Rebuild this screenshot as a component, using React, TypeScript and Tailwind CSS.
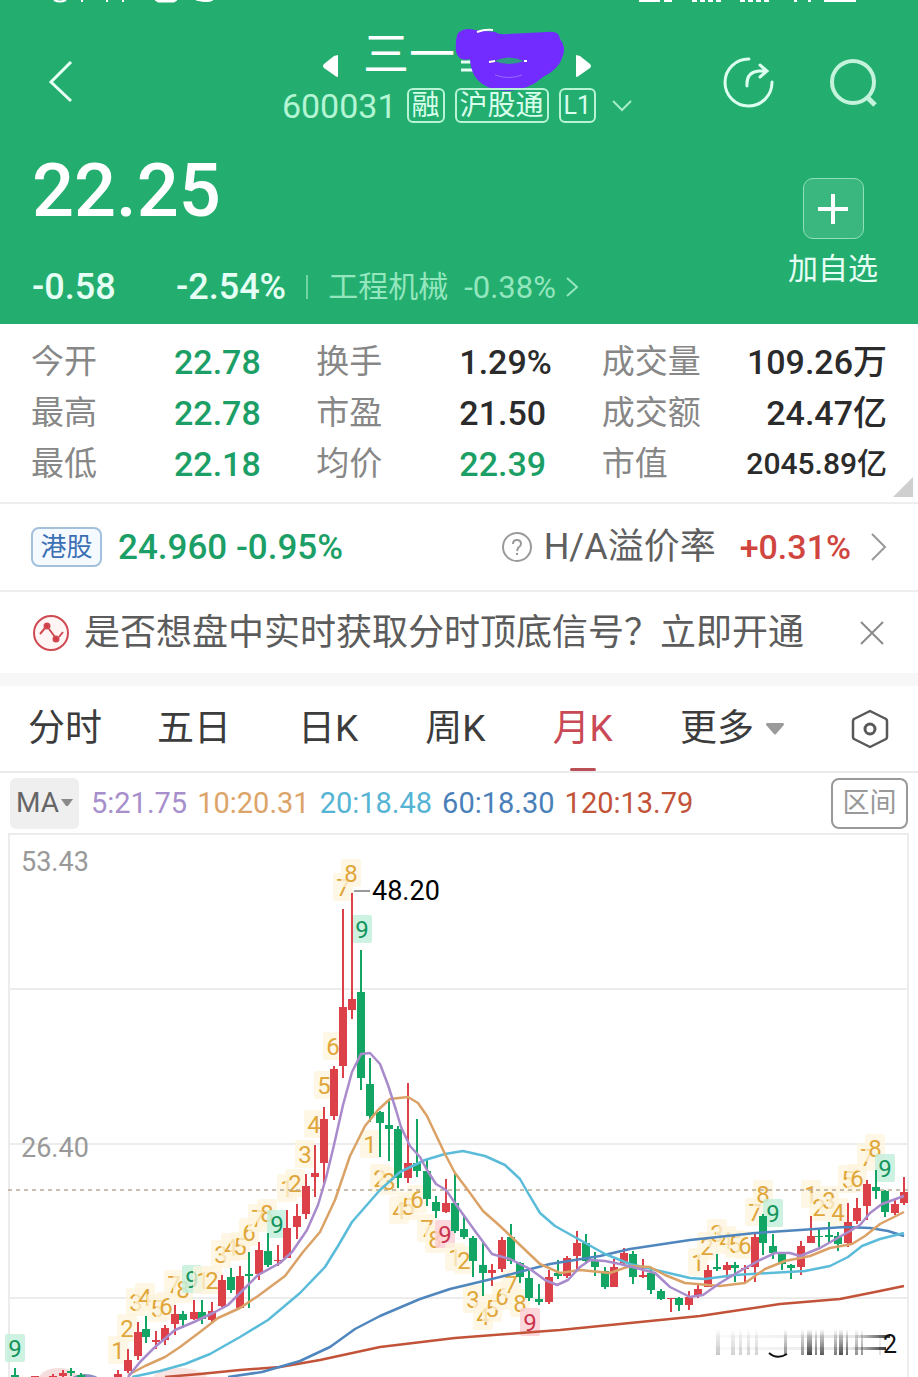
import type { ReactNode } from "react";

const GREEN = "#12a563";
const RED = "#dc4048";

type Candle = [x: number, high: number, top: number, bottom: number, low: number, up: 0 | 1];

// Every entry is in chart units: centre x, wick top, body top, body bottom, wick bottom, rising or not
const candles: Candle[] = [
  [15, 1368, 1375, 1377, 1377, 0],
  [35, 1376, 1376, 1377, 1377, 1],
  [53, 1374, 1376, 1377, 1377, 1],
  [63, 1370, 1373, 1376, 1377, 1],
  [71, 1368, 1371, 1373, 1376, 0],
  [81, 1373, 1375, 1377, 1377, 0],
  [118, 1370, 1374, 1377, 1377, 1],
  [128, 1349, 1360, 1371, 1373, 1],
  [138, 1322, 1332, 1356, 1360, 1],
  [146, 1316, 1329, 1337, 1343, 0],
  [156, 1331, 1340, 1342, 1349, 1],
  [165, 1325, 1328, 1340, 1345, 1],
  [175, 1305, 1314, 1324, 1335, 1],
  [183, 1311, 1314, 1320, 1328, 0],
  [194, 1300, 1312, 1319, 1320, 1],
  [202, 1300, 1312, 1319, 1324, 0],
  [212, 1302, 1311, 1320, 1322, 1],
  [222, 1275, 1280, 1306, 1307, 1],
  [231, 1268, 1277, 1290, 1293, 0],
  [240, 1266, 1276, 1308, 1309, 1],
  [249, 1252, 1274, 1276, 1308, 0],
  [259, 1242, 1250, 1274, 1280, 1],
  [268, 1233, 1251, 1265, 1267, 0],
  [278, 1245, 1260, 1261, 1266, 1],
  [287, 1210, 1228, 1258, 1258, 1],
  [297, 1204, 1216, 1227, 1239, 1],
  [306, 1174, 1186, 1214, 1219, 1],
  [315, 1145, 1173, 1177, 1197, 1],
  [324, 1107, 1119, 1163, 1183, 1],
  [334, 1066, 1069, 1116, 1120, 1],
  [343, 909, 1007, 1066, 1078, 1],
  [352, 893, 999, 1010, 1019, 1],
  [361, 950, 992, 1078, 1090, 0],
  [370, 1058, 1084, 1116, 1122, 0],
  [380, 1111, 1112, 1123, 1157, 0],
  [389, 1100, 1125, 1129, 1161, 0],
  [398, 1126, 1129, 1178, 1188, 0],
  [408, 1083, 1163, 1178, 1183, 1],
  [417, 1119, 1163, 1171, 1177, 0],
  [427, 1160, 1171, 1199, 1206, 0],
  [436, 1196, 1202, 1211, 1218, 0],
  [446, 1179, 1203, 1212, 1213, 1],
  [455, 1174, 1203, 1231, 1233, 0],
  [464, 1216, 1229, 1237, 1239, 0],
  [473, 1236, 1238, 1261, 1277, 0],
  [483, 1241, 1265, 1273, 1296, 0],
  [492, 1264, 1270, 1273, 1286, 1],
  [502, 1237, 1240, 1269, 1272, 1],
  [511, 1224, 1237, 1261, 1264, 0],
  [520, 1262, 1263, 1277, 1283, 0],
  [529, 1271, 1278, 1298, 1301, 0],
  [539, 1284, 1299, 1302, 1305, 0],
  [549, 1270, 1277, 1302, 1304, 1],
  [558, 1260, 1273, 1276, 1279, 0],
  [567, 1256, 1258, 1276, 1278, 1],
  [577, 1231, 1243, 1256, 1270, 1],
  [586, 1234, 1243, 1261, 1264, 0],
  [595, 1252, 1261, 1267, 1276, 0],
  [605, 1267, 1271, 1287, 1289, 0],
  [614, 1259, 1267, 1287, 1287, 1],
  [624, 1248, 1253, 1263, 1266, 1],
  [633, 1251, 1254, 1277, 1284, 0],
  [643, 1259, 1275, 1277, 1278, 1],
  [651, 1270, 1273, 1290, 1294, 0],
  [661, 1289, 1291, 1299, 1300, 0],
  [671, 1298, 1298, 1299, 1312, 1],
  [679, 1297, 1298, 1305, 1311, 0],
  [689, 1291, 1297, 1305, 1310, 1],
  [698, 1285, 1289, 1296, 1298, 1],
  [708, 1265, 1270, 1287, 1287, 1],
  [717, 1254, 1267, 1269, 1271, 0],
  [727, 1262, 1265, 1270, 1279, 1],
  [735, 1262, 1265, 1268, 1282, 0],
  [745, 1265, 1268, 1269, 1282, 1],
  [755, 1232, 1237, 1267, 1282, 1],
  [763, 1214, 1216, 1243, 1255, 0],
  [773, 1234, 1246, 1253, 1259, 0],
  [782, 1252, 1254, 1264, 1270, 0],
  [791, 1264, 1265, 1268, 1279, 0],
  [801, 1241, 1246, 1267, 1275, 1],
  [811, 1216, 1236, 1243, 1243, 1],
  [819, 1230, 1236, 1237, 1247, 0],
  [829, 1222, 1235, 1237, 1243, 0],
  [838, 1232, 1236, 1244, 1251, 0],
  [848, 1203, 1222, 1243, 1247, 1],
  [857, 1198, 1208, 1221, 1224, 1],
  [867, 1180, 1184, 1206, 1220, 1],
  [876, 1170, 1187, 1191, 1199, 0],
  [885, 1190, 1191, 1212, 1217, 0],
  [895, 1200, 1204, 1213, 1215, 1],
  [904, 1177, 1192, 1203, 1205, 1],
];

// Nine-turn markers: x, y, digit, tone ("y" running, "g" top, "r" bottom)
const marks: [number, number, number, "y" | "g" | "r"][] = [
  [15, 1348, 9, "g"], [118, 1350, 1, "y"], [127, 1328, 2, "y"], [136, 1302, 3, "y"], [145, 1297, 4, "y"],
  [157, 1308, 5, "y"], [166, 1306, 6, "y"], [174, 1284, 7, "y"], [183, 1289, 8, "y"], [192, 1279, 9, "g"],
  [203, 1280, 1, "y"], [212, 1280, 2, "y"], [221, 1254, 3, "y"], [231, 1247, 4, "y"], [240, 1246, 5, "y"],
  [249, 1232, 6, "y"], [258, 1218, 7, "y"], [267, 1213, 8, "y"], [277, 1224, 9, "g"], [287, 1188, 1, "y"],
  [295, 1183, 2, "y"], [305, 1154, 3, "y"], [314, 1124, 4, "y"], [324, 1085, 5, "y"], [333, 1046, 6, "y"],
  [343, 887, 7, "y"], [351, 873, 8, "y"], [362, 929, 9, "g"], [370, 1144, 1, "y"], [380, 1178, 2, "y"],
  [389, 1181, 3, "y"], [399, 1210, 4, "y"], [408, 1206, 5, "y"], [417, 1199, 6, "y"], [427, 1228, 7, "y"],
  [435, 1239, 8, "y"], [445, 1234, 9, "r"], [455, 1257, 1, "y"], [464, 1260, 2, "y"], [473, 1299, 3, "y"],
  [483, 1316, 4, "y"], [492, 1308, 5, "y"], [502, 1296, 6, "y"], [511, 1284, 7, "y"], [520, 1303, 8, "y"],
  [530, 1322, 9, "r"], [698, 1262, 1, "y"], [707, 1246, 2, "y"], [717, 1233, 3, "y"], [726, 1240, 4, "y"],
  [735, 1244, 5, "y"], [745, 1245, 6, "y"], [755, 1212, 7, "y"], [763, 1194, 8, "y"], [773, 1213, 9, "g"],
  [811, 1194, 1, "y"], [819, 1207, 2, "y"], [829, 1200, 3, "y"], [838, 1212, 4, "y"], [848, 1179, 5, "y"],
  [857, 1178, 6, "y"], [867, 1157, 7, "y"], [875, 1148, 8, "y"], [885, 1168, 9, "g"],
];

const markTone = {
  y: { box: "#fdf4dd", text: "#e0a63a" },
  g: { box: "#c4f0dc", text: "#14955b" },
  r: { box: "#fbd0d6", text: "#c9344a" },
};

const averages = [
  {
    label: "120:13.79",
    cls: "text-[#c25238]",
    color: "#c25238",
    points:
      "165,1377 200,1374 240,1370 280,1367 320,1360 380,1347 455,1338 520,1333 560,1330 620,1324 700,1316 740,1310 780,1304 840,1299 875,1292 904,1286",
  },
  {
    label: "60:18.30",
    cls: "text-[#4a80b8]",
    color: "#4f86bd",
    points:
      "228,1377 262,1372 300,1361 330,1347 355,1329 380,1316 420,1299 450,1289 500,1277 550,1264 600,1256 630,1249 690,1240 755,1233 800,1230 845,1227 870,1228 888,1231 904,1236",
  },
  {
    label: "20:18.48",
    cls: "text-[#55b4d4]",
    color: "#5bbcd9",
    points:
      "132,1377 160,1371 185,1364 210,1354 240,1337 268,1320 300,1293 325,1267 338,1246 352,1222 380,1190 400,1172 425,1160 445,1154 463,1151 485,1156 505,1165 520,1179 528,1193 540,1213 555,1226 580,1240 605,1254 630,1264 660,1271 690,1278 705,1279 735,1275 770,1273 805,1271 830,1266 848,1257 862,1246 880,1239 904,1233",
  },
  {
    label: "10:20.31",
    cls: "text-[#dca468]",
    color: "#dba267",
    points:
      "128,1375 145,1366 165,1357 180,1347 200,1332 218,1318 240,1308 258,1296 285,1276 303,1252 320,1232 335,1200 350,1156 365,1126 378,1110 390,1099 408,1097 418,1103 427,1116 445,1154 455,1173 470,1193 483,1211 500,1226 520,1245 540,1264 560,1273 580,1270 610,1273 630,1266 650,1267 665,1275 685,1283 720,1286 745,1283 765,1269 785,1261 810,1256 830,1248 852,1244 865,1236 880,1224 904,1212",
  },
  {
    label: "5:21.75",
    cls: "text-[#a68fcb]",
    color: "#a98bcb",
    points:
      "128,1377 140,1362 155,1347 175,1330 194,1322 215,1312 228,1305 240,1293 258,1275 280,1263 292,1252 307,1230 318,1205 326,1178 334,1145 343,1105 352,1072 361,1054 370,1053 380,1064 388,1085 396,1110 401,1127 410,1146 420,1157 427,1170 436,1184 446,1190 457,1206 475,1231 492,1254 510,1259 530,1269 545,1280 557,1285 568,1280 580,1267 590,1260 605,1261 620,1264 640,1269 655,1273 670,1287 690,1297 703,1295 720,1283 740,1271 760,1260 775,1253 790,1253 800,1256 820,1248 850,1231 860,1225 870,1213 882,1204 904,1196",
  },
];

const stats = [
  [
    ["今开", "22.78", "g"],
    ["最高", "22.78", "g"],
    ["最低", "22.18", "g"],
  ],
  [
    ["换手", "1.29%", ""],
    ["市盈", "21.50", ""],
    ["均价", "22.39", "g"],
  ],
  [
    ["成交量", "109.26万", ""],
    ["成交额", "24.47亿", ""],
    ["市值", "2045.89亿", "s"],
  ],
];

function StatusRemnant() {
  return (
    <svg viewBox="0 0 918 4" className="block w-full" fill="none" stroke="#fff" aria-hidden="true">
      <path d="M54 0q6 3 12 0M82 0v2M107 0v2M123 0v2" strokeWidth="2" />
      <path d="M155 0h22l-3 2h-16zM196 0q12 3 17 0" fill="#fff" />
      <path d="M639 1h21M664 1h8M692 1h5M700 1h5M708 1h5M716 1h5M740 1h5M748 1h5M756 1h5M764 1h5M794 1h3M808 1h3M824 1h32" strokeWidth="2" />
    </svg>
  );
}

function Scribble() {
  return (
    <svg viewBox="0 0 110 64" className="w-[110px] h-[64px]" aria-hidden="true">
      <path d="M6 34h12M6 42h14" stroke="#e8fff4" strokeWidth="3" />
      <path
        d="M3 5Q10-1 20 2L40 4Q44 7 52 6L92 4Q104 2 105 11Q112 20 107 30Q104 41 88 49Q74 62 52 63Q28 62 19 47Q15 38 15 31Q4 34 1 24Q0 12 3 5z"
        fill="#732cff"
      />
      <path d="M39 33Q54 26 69 33Q54 39 39 33z" fill="#2f9a86" />
      <path d="M34 34l6-1M69 33l3 0M22 4q8-3 16-2" stroke="#fff" strokeWidth="2" fill="none" />
      <path d="M40 47q14 5 27 0" stroke="#9a6bff" strokeWidth="1" fill="none" />
    </svg>
  );
}

function Tag({ children }: { children: ReactNode }) {
  return (
    <span className="h-[35px] px-[3px] flex items-center rounded-md border-2 border-[#b9f3d6] leading-none text-[#d8ffec]">
      {children}
    </span>
  );
}

function Header() {
  return (
    <header className="bg-[#23ae70] text-white">
      <StatusRemnant />
      <nav className="grid grid-cols-[1fr_auto_1fr] items-center pt-6 pl-9 pr-10">
        <button aria-label="返回" className="justify-self-start ml-3 mt-3">
          <svg viewBox="0 0 26 42" className="w-[26px] h-[42px]" fill="none" stroke="#e6fff4" strokeWidth="3">
            <path d="M23 1L3 21l20 19" />
          </svg>
        </button>

        <div className="flex flex-col items-center">
          <div className="flex items-center h-[60px]">
            <button aria-label="上一只" className="mt-4">
              <svg viewBox="0 0 16 22" className="w-4 h-[22px]" fill="#fff">
                <path d="M15 0v22q-2 0-4-2L1 13q-2-2 0-4l10-8z" />
              </svg>
            </button>
            <h1 className="ml-6 mb-2 text-[46px] leading-[56px] font-normal">三一</h1>
            <div className="mt-1">
              <Scribble />
            </div>
            <button aria-label="下一只" className="ml-2.5 mt-4">
              <svg viewBox="0 0 16 22" className="w-4 h-[22px]" fill="#fff">
                <path d="M1 0v22q2 0 4-2l10-7q2-2 0-4L5 1z" />
              </svg>
            </button>
          </div>
          <div className="flex items-center gap-2.5 h-[35px]">
            <span className="text-[34px] leading-none text-[#b4f5d4]">600031</span>
            <Tag>
              <span className="text-[28px]">融</span>
            </Tag>
            <Tag>
              <span className="text-[28px]">沪股通</span>
            </Tag>
            <Tag>
              <span className="text-[25px]">L1</span>
            </Tag>
            <svg viewBox="0 0 20 12" className="ml-1.5 w-5 h-3" fill="none" stroke="#a6ecc9" strokeWidth="2">
              <path d="M1 1l9 9 9-9" />
            </svg>
          </div>
        </div>

        <div className="mt-3 flex items-center gap-[54px] justify-self-end">
          <button aria-label="分享">
            <svg viewBox="0 0 52 52" className="w-[52px] h-[52px]" fill="none" stroke="#dcffef" strokeWidth="3" strokeLinecap="round">
              <path d="M27 3A23.500 23.500 0 1 0 50 26" />
              <path d="M25 30q-1-14 12-15h7M38 9l7 6-7 6" />
            </svg>
          </button>
          <button aria-label="搜索">
            <svg viewBox="0 0 50 50" className="w-[50px] h-[50px]" fill="none" stroke="#c4f3db" strokeWidth="4">
              <circle cx="25" cy="25" r="21" />
              <path d="M40 41l7 7" strokeWidth="5" />
            </svg>
          </button>
        </div>
      </nav>

      <section className="flex justify-between items-start pl-8 pr-10 pb-[17px]">
        <div className="pt-8">
          <p className="text-[74px] leading-[72px] font-medium">22.25</p>
          <div className="mt-10 h-10 flex items-center">
            <span className="w-[144px] text-[36px] leading-none font-medium text-[#e6fff4]">-0.58</span>
            <span className="text-[36px] leading-none font-medium text-[#e6fff4]">-2.54%</span>
            <span className="ml-5 w-0.5 h-6 bg-[#6fd3a4]" />
            <a href="#sector" className="ml-5 flex items-center text-[#93e6bd]">
              <span className="text-[30px] leading-none">工程机械</span>
              <span className="ml-4 text-[31px] leading-none">-0.38%</span>
              <svg viewBox="0 0 12 20" className="ml-2.5 w-3 h-5" fill="none" stroke="currentColor" strokeWidth="2">
                <path d="M1 1l10 9-10 9" />
              </svg>
            </a>
          </div>
        </div>
        <button className="mt-[55px] flex flex-col items-center">
          <span className="w-[61px] h-[61px] flex items-center justify-center rounded-[10px] border border-[#8fe0b8] bg-[#39b77e]">
            <svg viewBox="0 0 30 30" className="w-[30px] h-[30px]" stroke="#fff" strokeWidth="4">
              <path d="M0 15h30M15 0v30" />
            </svg>
          </span>
          <span className="mt-2.5 text-[30px] leading-10 text-[#e6fff4]">加自选</span>
        </button>
      </section>
    </header>
  );
}

function Stats() {
  return (
    <section className="relative grid grid-cols-3 px-[31px] pt-3 pb-[13px] border-b-2 border-[#eeeeee]">
      {stats.map((column, i) => (
        <dl key={i}>
          {column.map(([label, value, tone]) => (
            <div key={label} className={`flex items-center h-[51px] ${i === 2 ? "justify-between" : ""}`}>
              <dt className={`text-[33px] leading-none text-[#878787] ${i === 2 ? "" : "w-[143px]"}`}>{label}</dt>
              <dd
                className={`leading-none font-medium whitespace-nowrap ${tone === "s" ? "text-[30px]" : "text-[34px]"} ${
                  tone === "g" ? "text-[#1c9f66]" : "text-[#2b2b2b]"
                }`}
              >
                {value}
              </dd>
            </div>
          ))}
        </dl>
      ))}
      <svg viewBox="0 0 20 20" className="absolute right-[5px] bottom-[5px] w-5 h-5" fill="#cfcfcf">
        <path d="M20 0v20H0z" />
      </svg>
    </section>
  );
}

function HkRow() {
  return (
    <section className="flex items-center h-[88px] px-[31px] border-b-2 border-[#eeeeee]">
      <span className="flex items-center justify-center w-[71px] h-10 rounded-lg border-2 border-[#a3c1dc] bg-[#f4faff] text-[26px] leading-none text-[#3b70b4]">
        港股
      </span>
      <span className="ml-4 text-[35px] leading-none font-medium text-[#1c9f66]">24.960 -0.95%</span>
      <a href="#premium" className="ml-auto flex items-center">
        <svg viewBox="0 0 30 30" className="w-[30px] h-[30px]" fill="none" stroke="#999" strokeWidth="2">
          <circle cx="15" cy="15" r="14" />
          <path d="M11 12q0-4 4-4t4 4q0 2-3 4l-1 3M15 21v2" />
        </svg>
        <span className="ml-3 text-[36px] leading-none text-[#5f5f5f]">H/A溢价率</span>
        <span className="ml-6 text-[34px] leading-none font-medium text-[#d1453f]">+0.31%</span>
        <svg viewBox="0 0 16 28" className="ml-5 w-4 h-7" fill="none" stroke="#999" strokeWidth="2">
          <path d="M1 1l13 13L1 27" />
        </svg>
      </a>
    </section>
  );
}

function Notice() {
  return (
    <section className="flex items-center h-[81px] pl-8 pr-[34px]">
      <svg viewBox="0 0 38 38" className="w-[38px] h-[38px]" fill="none" stroke="#cf4a52" strokeWidth="2">
        <circle cx="19" cy="19" r="17" fill="#fff5f5" />
        <path d="M8 20l5-6M17 15l6 8M27 23l4-5" />
        <circle cx="15" cy="12" r="2.500" fill="#cf3a44" />
        <circle cx="24" cy="25" r="2.500" fill="#cf3a44" />
      </svg>
      <p className="ml-[14px] text-[36px] leading-none text-[#5c5c5c] whitespace-nowrap">
        是否想盘中实时获取分时顶底信号？立即开通
      </p>
      <button aria-label="关闭" className="ml-auto">
        <svg viewBox="0 0 24 24" className="w-6 h-6" stroke="#8a8a8a" strokeWidth="2">
          <path d="M1 1l22 22M23 1L1 23" />
        </svg>
      </button>
    </section>
  );
}

function Tabs() {
  return (
    <nav className="flex items-center justify-between h-[87px] pl-7 pr-[29px] border-b-2 border-[#ebebeb] text-[37px] leading-none text-[#3c3c3c]">
      <button className="-mr-3">分时</button>
      <button>五日</button>
      <button>日K</button>
      <button>周K</button>
      <button className="relative h-full text-[#c94a56]">
        月K
        <span className="absolute bottom-0 left-1/2 -translate-x-1/2 w-[26px] h-[3px] rounded-full bg-[#b95058]" />
      </button>
      <button className="flex items-center gap-3">
        更多
        <svg viewBox="0 0 18 12" className="w-[18px] h-3" fill="#9a9a9a">
          <path d="M1 0h16q2 1 0 3l-7 8q-1 1-2 0L1 3q-2-2 0-3z" />
        </svg>
      </button>
      <button aria-label="设置">
        <svg viewBox="0 0 38 40" className="w-[38px] h-10" fill="none" stroke="#585858" strokeWidth="2.500" strokeLinejoin="round">
          <path d="M19 2l16 8q1 1 1 2v16q0 1-1 2l-16 8-16-8q-1-1-1-2V12q0-1 1-2z" />
          <circle cx="19" cy="20" r="5" strokeWidth="3" />
        </svg>
      </button>
    </nav>
  );
}

function AverageBar() {
  return (
    <div className="flex items-center h-[60px] px-[10px]">
      <button className="flex items-center justify-center gap-0.5 w-[69px] h-[51px] rounded-md bg-[#efefef] text-[28px] leading-none text-[#666]">
        MA
        <svg viewBox="0 0 12 8" className="w-3 h-2" fill="#8a8a8a">
          <path d="M0 0h12L7 7H5z" />
        </svg>
      </button>
      <div className="ml-3 flex gap-2.5 text-[29px] leading-none">
        {[...averages].reverse().map((a) => (
          <span key={a.label} className={a.cls}>
            {a.label}
          </span>
        ))}
      </div>
      <button className="ml-auto w-[77px] h-[51px] rounded-lg border-2 border-[#999] text-[27px] leading-none text-[#999]">
        区间
      </button>
    </div>
  );
}

function Watermark() {
  const bars: [number, number, number][] = [
    [716, 4, 0.25], [731, 4, 0.2], [739, 3, 0.2], [747, 3, 0.2], [755, 3, 0.2], [784, 3, 0.5],
    [801, 3, 0.5], [807, 5, 0.85], [815, 2, 0.6], [820, 4, 0.75], [834, 3, 0.6], [839, 4, 0.8],
    [846, 2, 0.7], [855, 3, 0.5], [861, 2, 0.5], [879, 2, 0.15],
  ];
  return (
    <g>
      <defs>
        <linearGradient id="fade" x1="0" y1="0" x2="0" y2="1">
          <stop offset="0" stopColor="#333" stopOpacity="0" />
          <stop offset="0.400" stopColor="#333" stopOpacity="0.500" />
          <stop offset="1" stopColor="#222" />
        </linearGradient>
        <linearGradient id="streak" x1="0" y1="0" x2="1" y2="0">
          <stop offset="0" stopColor="#333" stopOpacity="0.020" />
          <stop offset="0.800" stopColor="#333" stopOpacity="0.120" />
          <stop offset="1" stopColor="#222" stopOpacity="0.900" />
        </linearGradient>
      </defs>
      {bars.map(([x, w, o]) => (
        <rect key={x} x={x} y={1329} width={w} height={26} fill="url(#fade)" opacity={o} />
      ))}
      <rect x={714} y={1335} width={176} height={3} fill="url(#streak)" />
      <rect x={714} y={1347} width={172} height={3} fill="url(#streak)" />
      <path d="M769 1353q8 7 18 1" fill="none" stroke="#111" strokeWidth="2" />
      <text x="883" y="1353" fontSize="25" fill="#111">2</text>
    </g>
  );
}

function Chart() {
  return (
    <svg viewBox="0 833 918 544" className="block w-full" role="img" aria-label="月K线图">
      <g stroke="#ececec" strokeWidth="2" fill="none">
        <path d="M8 834h901M9 989h900M9 1144h900M9 1298h900M9 834v543M908 834v543" />
      </g>
      <ellipse cx="59" cy="1379" rx="20" ry="11" fill="#f6dede" />
      <ellipse cx="180" cy="1380" rx="28" ry="12" fill="#f8e4e0" />
      <ellipse cx="85" cy="1380" rx="14" ry="6" fill="#8b8fc2" />

      <g fontSize="27" fill="#999">
        <text x="21" y="871">53.43</text>
        <text x="21" y="1157">26.40</text>
      </g>

      {marks.map(([x, y, n, tone]) => (
        <g key={`${x}-${y}`}>
          <rect x={x - 10} y={y - 14} width={20} height={28} rx={2} fill={markTone[tone].box} opacity={tone === "y" ? 0.75 : 0.85} />
          <text x={x} y={y + 9} fontSize="24" textAnchor="middle" fill={markTone[tone].text}>
            {n}
          </text>
        </g>
      ))}

      <path d="M8 1190h900" stroke="#b9ab93" strokeWidth="1.500" strokeDasharray="4 4" />

      {candles.map(([x, high, top, bottom, low, up]) => (
        <g key={x} fill={up ? RED : GREEN}>
          <rect x={x - 1} y={high} width={2} height={low - high} />
          <rect x={x - 4} y={top} width={8} height={bottom - top} />
        </g>
      ))}

      {averages.map((a) => (
        <polyline key={a.label} points={a.points} fill="none" stroke={a.color} strokeWidth="2.500" strokeLinejoin="round" />
      ))}

      <path d="M354 891h16" stroke="#777" strokeWidth="1.500" />
      <text x="372" y="900" fontSize="27" fill="#000">48.20</text>
      <Watermark />
    </svg>
  );
}

export default function App() {
  return (
    <main className="w-full overflow-hidden bg-white font-['Roboto','Noto_Sans_CJK_SC',sans-serif]">
      <Header />
      <Stats />
      <HkRow />
      <Notice />
      <div className="h-[13px] bg-[#f7f7f7]" />
      <Tabs />
      <AverageBar />
      <Chart />
    </main>
  );
}
